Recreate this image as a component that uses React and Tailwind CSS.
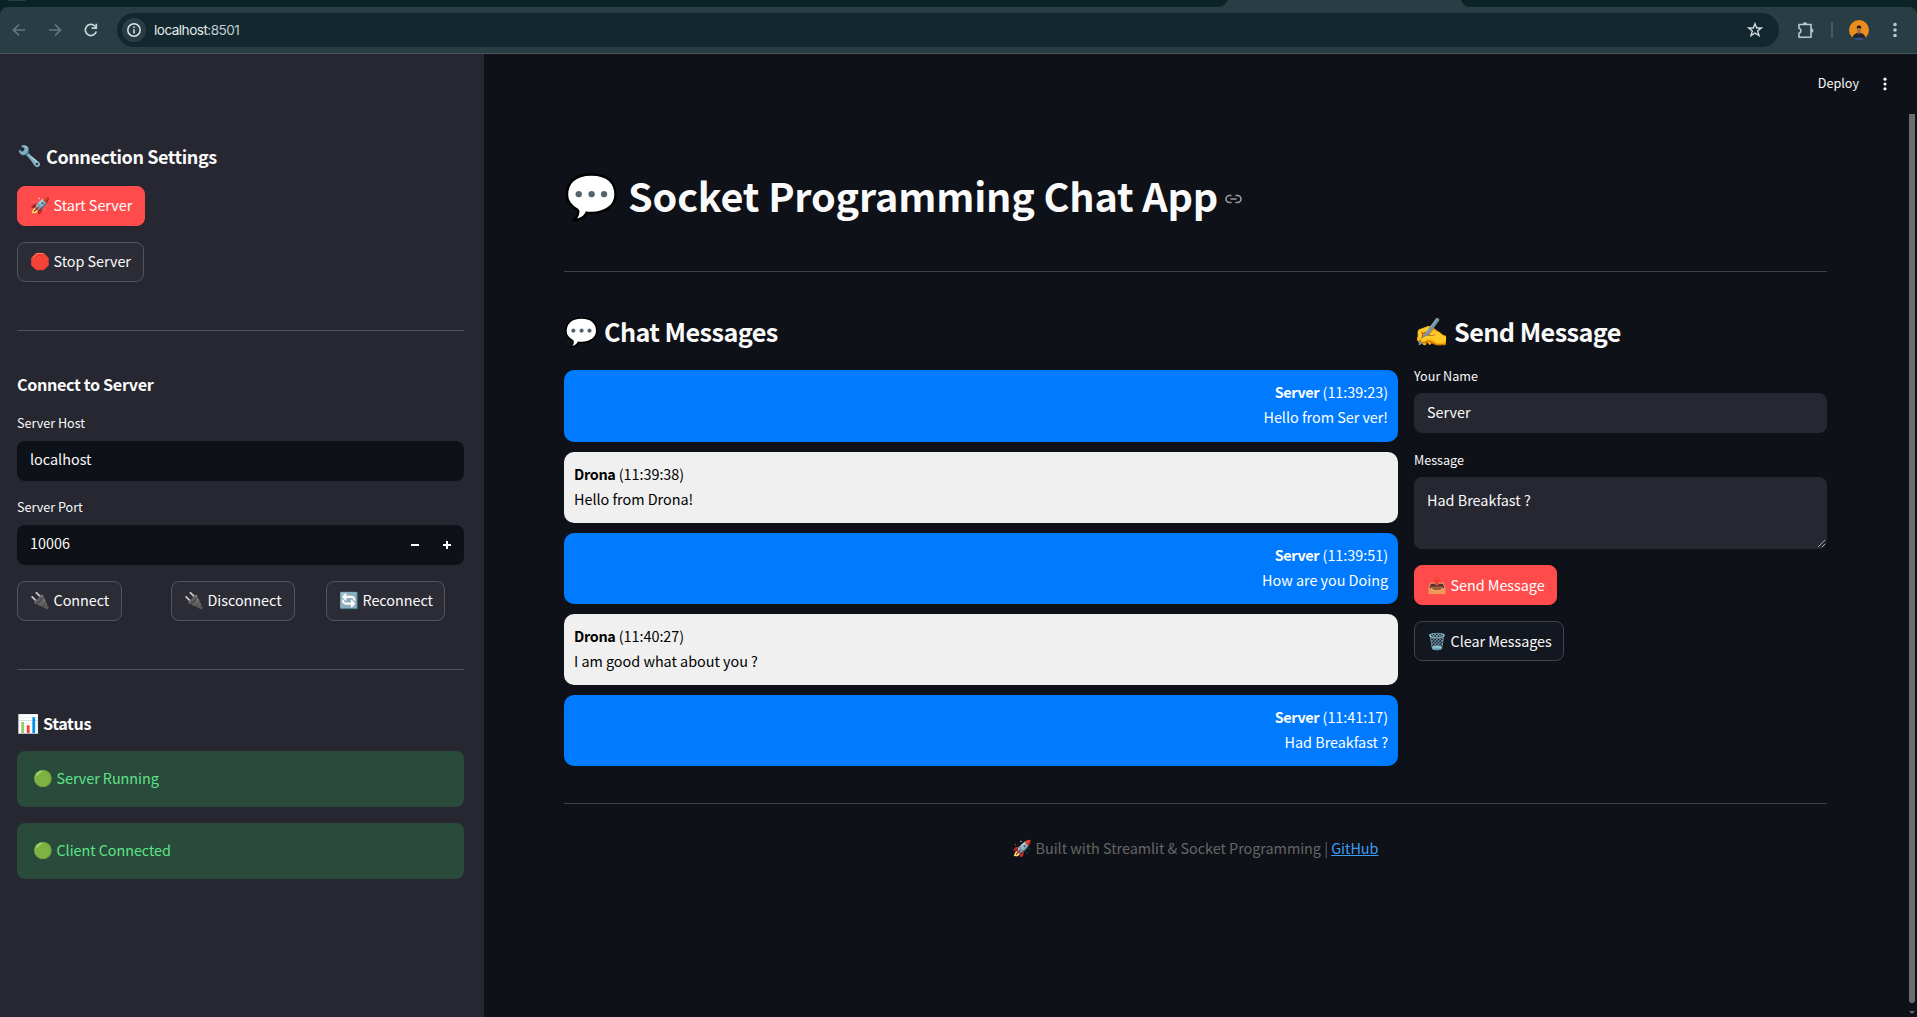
const F = 'font-["Noto_Sans_CJK_SC",sans-serif]';

function E({ children, className }) {
  return (
    <span className={`inline-block shrink-0 font-["Noto_Color_Emoji",sans-serif] font-normal tracking-normal ${className}`}>{children}</span>
  );
}

function Btn({ icon, children, className, pad = "pb-px" }) {
  return (
    <button className={`flex h-10 items-center rounded-lg border pl-3 text-left text-[14.4px] leading-none tracking-[-0.04px] ${pad} ${className}`}>
      <E className="w-[23.5px] text-[16px]">{icon}</E>
      <span className="whitespace-nowrap">{children}</span>
    </button>
  );
}

function Bubble({ own, name, time, text, tall }) {
  return (
    <div
      className={`rounded-[10px] px-2.5 pt-[9px] text-[14.4px] leading-[25.4px] tracking-[-0.02px] ${tall ? "h-[72px]" : "h-[71px]"} ${own ? "bg-[#007bff] text-right text-white" : "bg-[#f0f0f0] text-black"}`}
    >
      <p><b className="font-bold tracking-[-0.33px]">{name}</b> ({time})</p>
      <p>{text}</p>
    </div>
  );
}

const messages = [
  { own: true, name: "Server", time: "11:39:23", text: "Hello from Ser ver!", tall: true },
  { name: "Drona", time: "11:39:38", text: "Hello from Drona!" },
  { own: true, name: "Server", time: "11:39:51", text: "How are you Doing" },
  { name: "Drona", time: "11:40:27", text: "I am good what about you ?" },
  { own: true, name: "Server", time: "11:41:17", text: "Had Breakfast ?" },
];

function Dots({ className }) {
  return (
    <svg viewBox="0 0 4 16" className={className} fill="currentColor">
      <circle cx="2" cy="2.5" r="1.8" /><circle cx="2" cy="8" r="1.8" /><circle cx="2" cy="13.5" r="1.8" />
    </svg>
  );
}

function BrowserBar() {
  return (
    <div className="h-[54px] shrink-0 bg-[#0a2326]">
      <div className="flex h-[7px] items-start">
        <div className="ml-2 h-px w-[18px] rounded-b bg-[#293d44]" />
        <svg className="ml-[1192px] h-[7px] w-[255px]" viewBox="0 0 255 7" fill="#293d44"><path d="M0 7C5 7 8 4 9.500 0H243C244.500 4 247 7 252 7Z" /></svg>
      </div>
      <div className="flex h-[47px] items-center rounded-t-lg border-b border-[#45545b] bg-[#293d44] text-[#b0cdd3]">
        <svg className="ml-[11px] size-4 text-[#64777d]" viewBox="0 0 16 16" fill="none" stroke="currentColor" strokeWidth="1.7"><path d="M14 8H3M8 2.500L2.500 8L8 13.500" /></svg>
        <svg className="ml-5 size-4 text-[#64777d]" viewBox="0 0 16 16" fill="none" stroke="currentColor" strokeWidth="1.7"><path d="M2 8H13M8 2.500L13.500 8L8 13.500" /></svg>
        <svg className="ml-5 size-4 text-[#c3d4d9]" viewBox="0 0 16 16" fill="none" stroke="currentColor" strokeWidth="1.7"><path d="M13.300 9.500A5.600 5.600 0 1 1 11.900 4L13.100 5.600" /><path d="M13.300 1.800V6.200H8.600" /></svg>
        <div className="ml-[18px] flex h-[34px] w-[1662px] items-center rounded-full bg-[#12282e] pl-[5px]">
          <div className="flex size-6 items-center justify-center rounded-full bg-[#293d44]">
            <svg className="size-4" viewBox="0 0 16 16" fill="none" stroke="#dce6e9" strokeWidth="1.5"><circle cx="8" cy="8" r="6.200" /><path d="M8 7.200V11.400M8 4.400V6" /></svg>
          </div>
          <span className="ml-2 font-['Inter'] text-[13.6px] tracking-[-0.53px] text-[#c0cccf]"><span className="text-[#e3eaec]">localhost</span>:8501</span>
          <svg className="ml-auto mr-4 size-4" viewBox="0 0 16 16" fill="none" stroke="#d3dadd" strokeWidth="1.4"><path d="M8 1.700L9.700 6H14.200L10.700 8.900L12 13.600L8 11L4 13.600L5.300 8.900L1.800 6H6.300Z" /></svg>
        </div>
        <svg className="ml-[18px] h-[18px] w-[18px]" viewBox="0 0 18 18" fill="none" stroke="#b0cdd3" strokeWidth="1.6"><path d="M2 3.500H14V16.200H2V12.300C4.600 11.500 4.600 8.100 2 7.300Z" strokeLinejoin="round" /><path d="M6.500 3A1.700 1.700 0 0 1 9.500 3M14.500 8A1.700 1.700 0 0 1 14.500 11.200" fill="#b0cdd3" /></svg>
        <div className="ml-[16px] h-4 w-0.5 rounded bg-[#465b62]" />
        <svg className="ml-4 size-5" viewBox="0 0 20 20">
          <circle cx="10" cy="10" r="10" fill="#ea8d1b" />
          <path d="M3.500 17.500C4.300 14.500 6.500 13.800 8.500 12.800H11.500C13.500 13.800 15.700 14.500 16.500 17.500A10 10 0 0 1 3.500 17.500Z" fill="#22252f" />
          <path d="M4.500 18.300Q10 16.800 15.500 18.300A10 10 0 0 1 4.500 18.300Z" fill="#2c5294" />
          <path d="M8.700 11H11.300V13L10 14.800L8.700 13Z" fill="#8f5d42" />
          <ellipse cx="10" cy="9.500" rx="1.900" ry="2.800" fill="#a86f4d" /><path d="M7.900 9C7.400 6.500 8.300 5.500 10 5.500S12.600 6.500 12.100 9C11.600 7.900 11 8 10 8S8.400 7.900 7.900 9Z" fill="#1b1a1e" />
        </svg>
        <Dots className="ml-[18px] h-4 w-4" />
      </div>
    </div>
  );
}

function Field({ label, children }) {
  return (
    <>
      <div className="h-[17px] text-[12.6px] leading-[15px]">{label}</div>
      {children}
    </>
  );
}

function Sidebar() {
  const dark = "border-[#53545c] bg-[#2b2c36] text-[#fafafa]";
  return (
    <aside className="w-[484px] shrink-0 bg-[#262730] pl-[17px] pr-5 pt-[86px]">
      <h2 className="flex h-8 items-center text-[18px] font-bold tracking-[-0.42px]"><E className="w-[29px] text-[20px]">🔧</E><span>Connection Settings</span></h2>
      <Btn icon="🚀" className="mt-[14px] w-32 border-[#ff4b4b] bg-[#ff4b4b] text-white">Start Server</Btn>
      <Btn icon="🛑" className={`mt-4 w-[127px] ${dark}`}>Stop Server</Btn>
      <hr className="mt-12 border-[#51525a]" />
      <h3 className="mt-[39px] h-7 text-[16.2px] font-bold leading-7 tracking-[-0.36px]">Connect to Server</h3>
      <div className="h-[17px]" />
      <Field label="Server Host"><div className="mt-[9px] h-10 rounded-lg bg-[#0e1117] pl-[13px] text-[14.4px] leading-[36px]">localhost</div></Field>
      <div className="h-[18px]" />
      <Field label="Server Port">
        <div className="mt-[9px] flex h-10 items-center rounded-lg bg-[#0e1117] pl-[13px] pr-3 text-[14.4px]">
          <span className="-mt-1">10006</span>
          <svg className="ml-auto size-[10px]" viewBox="0 0 10 10"><path d="M1 4h8v2H1z" fill="#fff" /></svg>
          <svg className="ml-[22px] size-[10px]" viewBox="0 0 10 10"><path d="M1 4h3V1h2v3h3v2H6v3H4V6H1z" fill="#fff" /></svg>
        </div>
      </Field>
      <div className="mt-4 flex">
        <Btn icon="🔌" className={`w-[105px] ${dark}`}>Connect</Btn>
        <Btn icon="🔌" className={`ml-[49px] w-[124px] ${dark}`}>Disconnect</Btn>
        <Btn icon="🔄" className={`ml-[31px] w-[119px] ${dark}`}>Reconnect</Btn>
      </div>
      <hr className="mt-12 border-[#51525a]" />
      <h3 className="mt-[39px] flex h-7 items-center text-[16.2px] font-bold tracking-[-0.4px]"><E className="w-[26px] text-[18px]">📊</E><span>Status</span></h3>
      <div className="mt-[14px] flex flex-col gap-4">
        {["Server Running", "Client Connected"].map((t) => (
          <div key={t} className="flex h-14 items-center rounded-lg bg-[#2a4a3b] pb-0.5 pl-4 text-[14.4px] tracking-[-0.06px] text-[#5ce488]">
            <E className="mt-0.5 w-[23.5px] text-[16px]">🟢</E><span>{t}</span>
          </div>
        ))}
      </div>
    </aside>
  );
}

function Main() {
  return (
    <main className="flex min-w-0 grow bg-[#0e1117]">
      <div className="grow pl-20">
        <div className="flex h-[60px] items-center justify-end pb-0.5 pr-4 text-[12.6px]">
          <span>Deploy</span><Dots className="ml-[18px] mt-0.5 h-[14px] w-4" />
        </div>
        <div className="w-[1263px]">
          <h1 className="mt-[47px] flex h-[70px] items-center text-[39.6px] font-bold tracking-[-0.16px]">
            <E className="mt-0.5 w-16 text-[44px]">💬</E><span className="-mt-[3px] whitespace-nowrap">Socket Programming Chat App</span>
            <svg className="ml-[7px] mt-[6px] h-[10px] w-[17px]" viewBox="0 0 17 10" fill="none" stroke="#9b9da1" strokeWidth="1.6"><path d="M10.500 1.500H12.500A3.500 3.500 0 0 1 12.500 8.500H10.500M6.500 8.500H4.500A3.500 3.500 0 0 1 4.500 1.500H6.500M5.500 5H11.500" /></svg>
          </h1>
          <hr className="mt-10 border-[#3e4045]" />
          <div className="flex">
            <section className="w-[834px]">
              <h2 className="mt-10 flex h-10 items-center text-[25.2px] font-bold tracking-[-0.56px]"><E className="mt-0.5 w-10 text-[28px]">💬</E><span>Chat Messages</span></h2>
              <div className="mt-[18px] flex flex-col gap-[10px]">{messages.map((m) => <Bubble key={m.time} {...m} />)}</div>
            </section>
            <section className="ml-4 w-[413px]">
              <h2 className="mt-10 flex h-10 items-center text-[25.2px] font-bold tracking-[-0.56px]"><E className="mt-0.5 w-10 text-[28px]">✍️</E><span>Send Message</span></h2>
              <div className="h-4" />
              <Field label="Your Name"><div className="mt-2 h-10 rounded-lg bg-[#262730] pl-[13px] text-[14.4px] leading-[38px]">Server</div></Field>
              <div className="h-[19px]" />
              <Field label="Message">
                <div className="mt-2 flex h-[72px] justify-between rounded-lg bg-[#262730] pl-[13px] text-[14.4px]">
                  <span className="mt-[11px] h-6 leading-6">Had Breakfast ?</span>
                  <svg className="mb-0.5 mr-0.5 size-2 self-end" viewBox="0 0 8 8" stroke="#c8c8cb" strokeWidth=".8"><path d="M1 8L8 1M5 8L8 5" /></svg>
                </div>
              </Field>
              <Btn pad="pt-px" icon="📤" className="mt-4 w-[143px] border-[#ff4b4b] bg-[#ff4b4b] text-white">Send Message</Btn>
              <Btn pad="pt-px" icon="🗑️" className="mt-4 w-[150px] border-[#42444b] bg-[#131720]">Clear Messages</Btn>
            </section>
          </div>
          <hr className="mt-[37px] border-[#3e4045]" />
          <div className="mt-8 flex h-6 items-center justify-center text-[14.4px] tracking-[-0.03px] text-[#666]">
            <E className="mt-0.5 w-[23px] text-[16px]">🚀</E><span>Built with Streamlit &amp; Socket Programming | <a className="text-[#3d9df3] underline">GitHub</a></span>
          </div>
        </div>
      </div>
      <div className="mr-0.5 mt-[60px] flex w-1.5 shrink-0 flex-col">
        <div className="h-[889px] rounded-b-sm bg-[#6b6c70]" />
        <svg className="mt-2 h-[3px] w-1.5" viewBox="0 0 6 3"><path d="M0 0H6L3 3Z" fill="#6b6c70" /></svg>
      </div>
    </main>
  );
}

export default function App() {
  return (
    <div className={`flex h-[1017px] w-[1917px] flex-col overflow-hidden text-[#fafafa] ${F}`}>
      <BrowserBar />
      <div className="flex grow">
        <Sidebar />
        <Main />
      </div>
    </div>
  );
}
